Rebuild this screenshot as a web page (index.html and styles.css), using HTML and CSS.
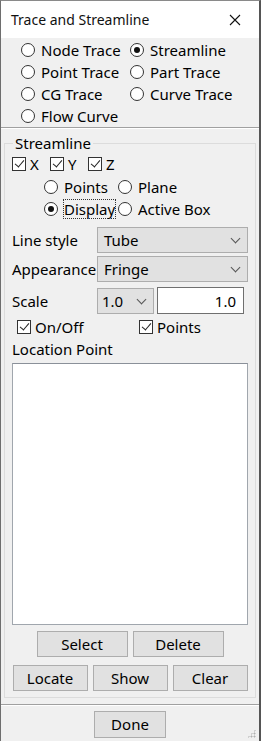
FILE: index.html
```html
<!DOCTYPE html>
<html lang="en">
<head>
  <meta charset="UTF-8">
  <title>Trace and Streamline</title>
  <link rel="stylesheet" href="styles.css">
</head>
<body>
  <div class="window">
    <header class="titlebar">
      <span class="title">Trace and Streamline</span>
      <svg class="close" width="12" height="12" viewBox="0 0 12 12">
        <path d="M1 1 L11 11 M11 1 L1 11" stroke="#111" stroke-width="1.1" fill="none"/>
      </svg>
    </header>

    <!-- trace mode selector -->
    <div class="modes">
      <label class="radio"><span class="dot"></span>Node Trace</label>
      <label class="radio"><span class="dot on"></span>Streamline</label>
      <label class="radio"><span class="dot"></span>Point Trace</label>
      <label class="radio"><span class="dot"></span>Part Trace</label>
      <label class="radio"><span class="dot"></span>CG Trace</label>
      <label class="radio"><span class="dot"></span>Curve Trace</label>
      <label class="radio"><span class="dot"></span>Flow Curve</label>
    </div>

    <div class="sep"></div>

    <fieldset class="group">
      <legend>Streamline</legend>

      <div class="axes">
        <label class="check"><span class="box"></span>X</label>
        <label class="check"><span class="box"></span>Y</label>
        <label class="check"><span class="box"></span>Z</label>
      </div>

      <div class="seeds">
        <label class="radio"><span class="dot"></span>Points</label>
        <label class="radio"><span class="dot"></span>Plane</label>
        <label class="radio"><span class="dot on"></span><span class="focus">Display</span></label>
        <label class="radio"><span class="dot"></span>Active Box</label>
      </div>

      <div class="field">
        <span class="field-label">Line style</span>
        <div class="combo wide">Tube<span class="chev"></span></div>
      </div>
      <div class="field">
        <span class="field-label">Appearance</span>
        <div class="combo wide">Fringe<span class="chev"></span></div>
      </div>
      <div class="field scale">
        <span class="field-label">Scale</span>
        <div class="combo small">1.0<span class="chev"></span></div>
        <div class="num">1.0</div>
      </div>

      <div class="toggles">
        <label class="check"><span class="box"></span>On/Off</label>
        <label class="check"><span class="box"></span>Points</label>
      </div>

      <div class="list-label">Location Point</div>
      <div class="listbox"></div>

      <div class="btn-row top">
        <button class="btn">Select</button>
        <button class="btn">Delete</button>
      </div>
      <div class="btn-row bottom">
        <button class="btn">Locate</button>
        <button class="btn">Show</button>
        <button class="btn">Clear</button>
      </div>
    </fieldset>

    <div class="sep lower"></div>

    <footer class="footer">
      <button class="btn done">Done</button>
      <span class="grip"></span>
    </footer>
  </div>
</body>
</html>
```

FILE: styles.css
```css
/* Dialog window */
body {
  margin: 0;
  padding: 0;
  font-family: "Noto Sans", "Open Sans", sans-serif;
  font-size: 15px;
  color: #000;
  background-color: #f0f0f0;
}

.window {
  width: 261px;
  height: 741px;
  box-sizing: border-box;
  border-left: 1px solid #6e6e6e;
  border-right: 2px solid #555;
  border-top: 1px solid #8a8a8a;
  background-color: #f0f0f0;
  position: relative;
  overflow: hidden;
}

.titlebar {
  height: 37px;
  background-color: #fff;
  display: flex;
  align-items: center;
  justify-content: space-between;
  padding: 0 18px 0 10px;
}

.title {
  font-size: 14px;
  color: #111;
}

/* radio buttons + check boxes */
.radio, .check {
  display: flex;
  align-items: center;
  height: 21.5px;
  white-space: nowrap;
}

.dot {
  width: 12px;
  height: 12px;
  border: 1px solid #333;
  border-radius: 50%;
  background: #fff;
  margin-right: 6px;
  flex: none;
  position: relative;
}

.dot.on::after {
  content: "";
  position: absolute;
  left: 3px;
  top: 3px;
  width: 6px;
  height: 6px;
  border-radius: 50%;
  background: #111;
}

.box {
  width: 12px;
  height: 12px;
  border: 1px solid #333;
  background: #fff;
  margin-right: 4px;
  flex: none;
  position: relative;
}

.box::after {
  content: "";
  position: absolute;
  left: 4px;
  top: 0px;
  width: 4px;
  height: 8px;
  border-right: 1.4px solid #222;
  border-bottom: 1.4px solid #222;
  transform: rotate(40deg);
}

.modes {
  display: grid;
  grid-template-columns: 109px 1fr;
  padding: 1px 0 0 20px;
  height: 88px;
}

.sep {
  height: 1px;
  background: #a0a0a0;
  border-bottom: 1px solid #fff;
}

.sep.lower {
  margin-top: 6px;
}

/* Streamline group */
.group {
  margin: 6px 3px 0 3px;
  padding: 0 7px 6px 7px;
  border: 1px solid #dcdcdc;
  min-width: 0;
}

.group legend {
  padding: 0 2px;
  margin-left: 1px;
  line-height: 16px;
}

.axes {
  display: flex;
  margin-top: 1px;
}

.axes .check {
  width: 38px;
  height: 24px;
}

.seeds {
  display: grid;
  grid-template-columns: 74px 1fr;
  padding-left: 32px;
}

.seeds .radio {
  height: 22px;
}

.focus {
  outline: 1px dotted #333;
  outline-offset: 0;
  line-height: 18px;
}

.field {
  display: flex;
  align-items: center;
  margin-top: 7px;
}

.field + .field {
  margin-top: 3px;
}

.field.scale {
  margin-top: 5px;
}

.field-label {
  width: 85px;
  flex: none;
}

.combo {
  height: 24px;
  border: 1px solid #adadad;
  background: #e1e1e1;
  display: flex;
  align-items: center;
  padding-left: 6px;
  position: relative;
}

.combo.wide {
  width: 143px;
}

.combo.small {
  width: 51px;
  padding-left: 4px;
}

.chev {
  position: absolute;
  right: 8px;
  top: 7px;
  width: 6px;
  height: 6px;
  border-right: 1px solid #555;
  border-bottom: 1px solid #555;
  transform: rotate(45deg);
}

.num {
  width: 78px;
  height: 25px;
  margin-left: 3px;
  border: 1px solid #6f6f6f;
  background: #fff;
  display: flex;
  align-items: center;
  justify-content: flex-end;
  padding-right: 7px;
}

.toggles {
  display: flex;
  padding-left: 5px;
  margin-top: 2px;
}

.toggles .check:first-child {
  width: 122px;
}

.list-label {
  height: 23px;
  line-height: 23px;
  margin-bottom: 2px;
}

.listbox {
  height: 260px;
  border: 1px solid #a0a6ad;
  border-top-color: #8a9099;
  background: #fff;
}

.btn {
  font-family: inherit;
  font-size: 15px;
  color: #000;
  background: #e1e1e1;
  border: 1px solid #adadad;
  height: 26px;
  padding: 0;
}

.btn-row {
  display: flex;
  justify-content: center;
  gap: 5px;
}

.btn-row.top {
  margin-top: 6px;
}

.btn-row.top .btn {
  width: 91px;
}

.btn-row.bottom {
  margin-top: 8px;
}

.btn-row.bottom .btn {
  width: 75px;
}

.footer {
  display: flex;
  justify-content: center;
  padding-top: 5px;
}

.btn.done {
  width: 72px;
  height: 27px;
}

.grip {
  position: absolute;
  right: 3px;
  bottom: 3px;
  width: 9px;
  height: 9px;
  background:
    radial-gradient(circle, #b0b0b0 0.8px, transparent 1.2px) 0 0 / 3px 3px;
  clip-path: polygon(100% 0, 100% 100%, 0 100%);
}
```
